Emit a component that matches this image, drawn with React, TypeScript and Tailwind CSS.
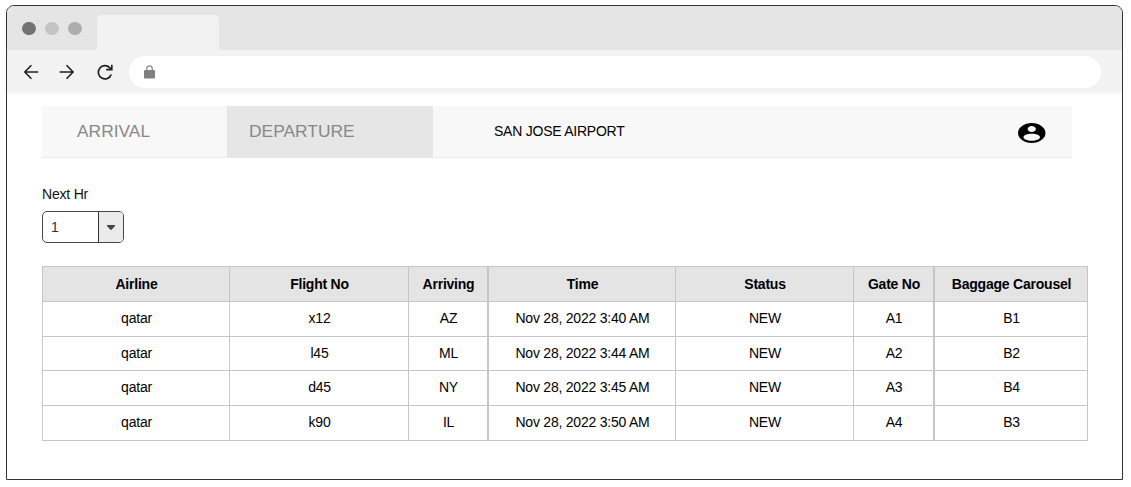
const columns = ["Airline", "Flight No", "Arriving", "Time", "Status", "Gate No", "Baggage Carousel"];

const flights = [
  ["qatar", "x12", "AZ", "Nov 28, 2022 3:40 AM", "NEW", "A1", "B1"],
  ["qatar", "l45", "ML", "Nov 28, 2022 3:44 AM", "NEW", "A2", "B2"],
  ["qatar", "d45", "NY", "Nov 28, 2022 3:45 AM", "NEW", "A3", "B4"],
  ["qatar", "k90", "IL", "Nov 28, 2022 3:50 AM", "NEW", "A4", "B3"],
];

// The third and sixth columns close with a heavier rule.
const cellEdge = (i: number) =>
  i === 2 || i === 5 ? "border-r-2 border-[#c6c6c6]" : "border-r border-[#c6c6c6]";

function BrowserBar() {
  return (
    <header>
      <div className="flex h-[44px] items-end bg-[#e5e5e5] pl-[15px]">
        <div className="mb-[15px] flex gap-[9.5px]">
          <span className="h-[13.5px] w-[13.5px] rounded-full bg-[#727272]" />
          <span className="h-[13.5px] w-[13.5px] rounded-full bg-[#c4c4c4]" />
          <span className="h-[13.5px] w-[13.5px] rounded-full bg-[#adadad]" />
        </div>
        <div className="ml-[15px] h-[35px] w-[122px] rounded-t-[5px] bg-[#f2f2f2]" />
      </div>
      <div className="flex h-[43px] items-center bg-[#f2f2f2] pt-px pl-[16px]">
        <svg className="h-4 w-4" viewBox="0 0 16 16" fill="none" stroke="#202020" strokeWidth="1.6">
          <path d="M15.2 8H2M8.4 1.2 1.8 8l6.6 6.8" />
        </svg>
        <svg className="ml-5 h-4 w-4" viewBox="0 0 16 16" fill="none" stroke="#202020" strokeWidth="1.6">
          <path d="M.6 8H14M7.5 1.2 14.1 8l-6.6 6.8" />
        </svg>
        <svg className="ml-[22px] h-4 w-4" viewBox="0 0 16 16" fill="none" stroke="#202020" strokeWidth="1.7">
          <path d="M14.2 10.4A6.6 6.6 0 1 1 12.8 3.8L14 5" />
          <path d="M14.8.8v4.9H9.2" />
        </svg>
        <div className="ml-4 flex h-8 w-[972px] items-center rounded-full bg-white pl-[15px]">
          <svg className="h-[14px] w-[11px]" viewBox="0 0 11 14">
            <path d="M2.8 6V3.6a2.7 2.7 0 0 1 5.4 0V6" fill="none" stroke="#858585" strokeWidth="1.2" />
            <rect x="0" y="5" width="11" height="8.4" rx="1" fill="#808080" />
          </svg>
        </div>
      </div>
    </header>
  );
}

function NavBar() {
  return (
    <nav className="flex h-[52px] w-[1030px] border-b border-[#ececec] bg-[#f8f8f8] text-[17.4px] leading-[51px] text-[#888]">
      <a className="-mb-px w-[184.5px] pl-[35px]">ARRIVAL</a>
      <a className="-mb-px w-[206.5px] bg-[#e6e6e6] pl-[22.5px]">DEPARTURE</a>
      <span className="ml-[61px] flex-1 text-[14px] tracking-[-0.24px] text-black">SAN JOSE AIRPORT</span>
      <svg className="mt-[17px] mr-[26.5px] h-5 w-[27.5px]" viewBox="2 2 20 20" preserveAspectRatio="none">
        <path
          fillRule="evenodd"
          d="M12 2C6.48 2 2 6.48 2 12s4.48 10 10 10 10-4.48 10-10S17.52 2 12 2zm0 3c1.66 0 3 1.34 3 3s-1.34 3-3 3-3-1.34-3-3 1.34-3 3-3zm0 14.7c-3.4 0-6-1.7-6-3.5s2.7-3.4 6-3.4 6 1.6 6 3.4-2.6 3.5-6 3.5z"
        />
      </svg>
    </nav>
  );
}

function HourSelect() {
  return (
    <div className="mt-[28px]">
      <div className="h-[17px] text-[14px] leading-[17px] tracking-[-0.2px] text-[#111]">Next Hr</div>
      <button className="mt-[8px] flex h-[32px] w-[82px] overflow-hidden rounded-[5px] border border-[#444] bg-white text-left text-[14px] leading-[30px] text-[#333]">
        <span className="w-[55px] pl-[8px]">1</span>
        <span className="flex h-full flex-1 items-center justify-center border-l border-[#333] bg-[#ebebeb]">
          <svg className="h-[5px] w-[8px]" viewBox="0 0 8 5">
            <path d="M0 0h8v1L4.6 4.7H3.4L0 1z" fill="#444" />
          </svg>
        </span>
      </button>
    </div>
  );
}

function FlightTable() {
  return (
    <div className="mt-[23px] w-[1046px] border-t border-l border-[#c6c6c6]">
      <div className="grid grid-cols-[187px_179px_80px_187px_178px_81px_153px] grid-rows-[35px_35px_34px_35px_35px] text-center text-[14px] leading-[33px] tracking-[-0.22px] text-black">
        {columns.map((name, i) => (
          <div key={name} className={`border-b bg-[#e4e4e4] pl-px leading-[35px] font-bold ${cellEdge(i)}`}>
            {name}
          </div>
        ))}
        {flights.map((row) =>
          row.map((value, i) => (
            <div key={row[1] + i} className={`border-b pl-px ${cellEdge(i)}`}>
              {value}
            </div>
          )),
        )}
      </div>
    </div>
  );
}

export default function App() {
  return (
    <div className="h-[487px] w-[1131px] bg-white pt-[5px] pl-[6px] font-['Liberation_Sans',Arial,sans-serif]">
      <div className="h-[475px] w-[1117px] overflow-hidden rounded-t-[8px] border border-[#333]">
        <BrowserBar />
        <main className="pt-[13px] pl-[35px]">
          <NavBar />
          <HourSelect />
          <FlightTable />
        </main>
      </div>
    </div>
  );
}
